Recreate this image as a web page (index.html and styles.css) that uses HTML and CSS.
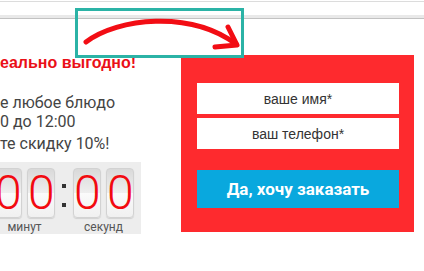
FILE: index.html
```html
<!DOCTYPE html>
<html lang="ru">
<head>
    <meta charset="UTF-8">
    <meta name="viewport" content="width=device-width, initial-scale=1.0">
    <title>Акция</title>
    <link rel="stylesheet" href="styles.css">
</head>
<body>
    <div class="bar"></div>
    <div class="bar-edge"></div>

    <div class="offer">
        <div class="offer-text">
            <h2 class="offer-title">еально выгодно!</h2>
            <p class="offer-desc">е любое блюдо<br>0 до 12:00</p>
            <p class="offer-desc offer-discount">те скидку 10%!</p>

            <div class="timer">
                <div class="timer-group">
                    <div class="timer-cards">
                        <div class="card">0</div>
                        <div class="card">0</div>
                    </div>
                    <div class="timer-label">минут</div>
                </div>
                <div class="timer-sep"><i></i><i></i></div>
                <div class="timer-group">
                    <div class="timer-cards">
                        <div class="card">0</div>
                        <div class="card">0</div>
                    </div>
                    <div class="timer-label">секунд</div>
                </div>
            </div>
        </div>

        <form class="order-form">
            <input class="field" type="text" placeholder="ваше имя*">
            <input class="field" type="text" placeholder="ваш телефон*">
            <button class="btn" type="button">Да, хочу заказать</button>
        </form>
    </div>

    <!-- annotation over the screenshot -->
    <svg class="annotation" width="424" height="271" viewBox="0 0 424 271">
        <rect x="76.5" y="9.5" width="166" height="47" fill="none" stroke="#2bb3a6" stroke-width="3"/>
        <path d="M86 42 C118 18 190 10 236 44" fill="none" stroke="#f20d14" stroke-width="5" stroke-linecap="round"/>
        <path d="M228 27 L237 45 L215 47" fill="none" stroke="#f20d14" stroke-width="5" stroke-linecap="round" stroke-linejoin="round"/>
    </svg>
</body>
</html>
```

FILE: styles.css
```css
body {
    margin: 0;
    background-color: #fff;
    font-family: Roboto, "Liberation Sans", sans-serif;
    overflow: hidden;
    position: relative;
    height: 271px;
}
.bar {
    margin-top: 1px;
    height: 13px;
    border-top: 1px solid #dcdcdc;
}
.bar-edge {
    height: 3px;
    background-color: #e9e9e9;
    border-bottom: 1px solid #c2c2c2;
}
.offer {
    display: flex;
    align-items: flex-start;
    margin-top: 36px;
}
.offer-text {
    width: 141px;
}
.offer-title {
    margin: -1px 0 0;
    font-family: "Liberation Sans", Arial, sans-serif;
    font-size: 16px;
    line-height: 18px;
    font-weight: bold;
    color: #ea0f17;
    white-space: nowrap;
}
.offer-desc {
    margin: 21px 0 0;
    font-size: 16px;
    line-height: 19px;
    color: #444;
    white-space: nowrap;
}
.offer-discount {
    margin-top: 3px;
}
.timer {
    display: flex;
    margin: 9px 0 0 -13px;
    padding: 6px 7px 0;
    height: 66px;
    background-color: #ededed;
}
.timer-cards {
    display: flex;
    gap: 5px;
}
.card {
    width: 26px;
    height: 48px;
    border: 1px solid #d2d2d2;
    border-radius: 4px;
    background: linear-gradient(#d9d9d9, #efefef 50%, #fbfbfb 50%, #f0f0f0);
    box-shadow: 0 1px 1px rgba(0,0,0,0.12);
    text-align: center;
    font-size: 48px;
    font-weight: 300;
    line-height: 48px;
    color: #f20a10;
}
.timer-label {
    margin-top: 2px;
    font-size: 12px;
    color: #555;
    text-align: center;
}
.timer-sep {
    width: 18px;
    padding-top: 16px;
    display: flex;
    flex-direction: column;
    align-items: center;
    gap: 15px;
}
.timer-sep i {
    width: 4px;
    height: 4px;
    background-color: #333;
}
.order-form {
    display: flex;
    flex-direction: column;
    gap: 4px;
    margin-left: 40px;
    width: 202px;
    padding: 28px 15px 24px 16px;
    background-color: #fe2a2e;
}
.field {
    height: 31px;
    box-sizing: border-box;
    border: none;
    padding: 0;
    font-family: "Liberation Sans", Arial, sans-serif;
    font-size: 14px;
    text-align: center;
    background-color: #fff;
    outline: none;
}
.field::placeholder {
    color: #333;
}
.btn {
    margin-top: 17px;
    height: 38px;
    border: none;
    background-color: #09a8de;
    color: #fff;
    font-family: Roboto, "Liberation Sans", sans-serif;
    font-size: 17px;
    font-weight: bold;
    cursor: pointer;
}
.annotation {
    position: absolute;
    left: 0;
    top: 0;
    pointer-events: none;
}
```
